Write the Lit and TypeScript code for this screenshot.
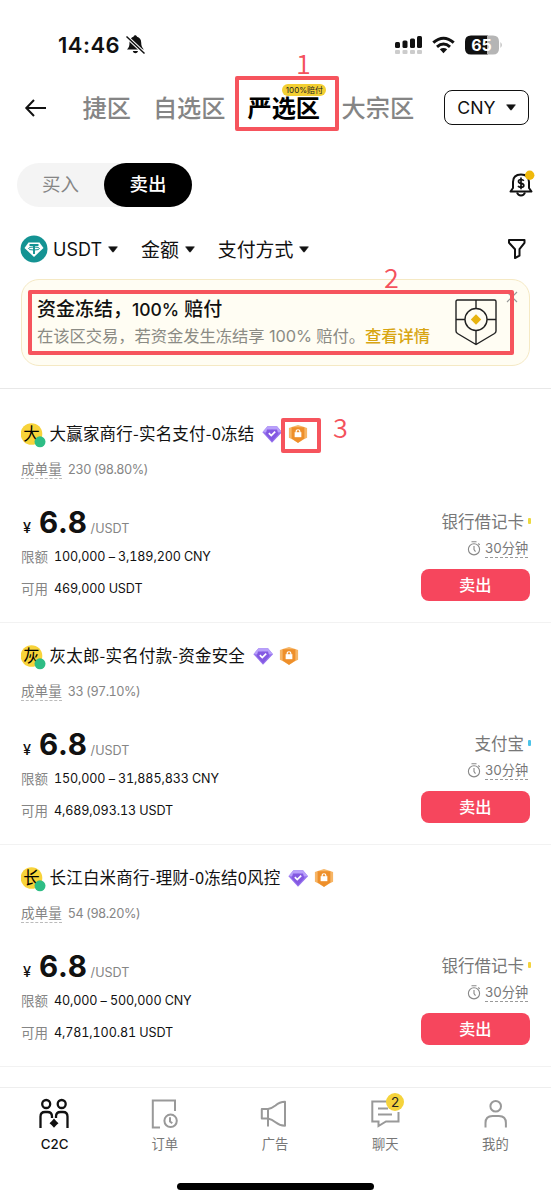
import { LitElement, html, css, svg } from "lit";
import { customElement, property } from "lit/decorators.js";

const caret = html`<svg width="10" height="7" viewBox="0 0 10 7"><path d="M.6.8h8.8L5.6 5.8q-.6.7-1.2 0z" fill="#111" stroke="#111" stroke-width=".6" stroke-linejoin="round"/></svg>`;

const tabIcons = [
  svg`<g fill="none" stroke="#111" stroke-width="2.3"><circle cx="7.2" cy="6" r="4"/><circle cx="22.700" cy="6" r="4"/><path d="M1.500 30V18.500q0-4.500 4.500-4.500h2.500q4.500 0 4.500 4.500V20"/><path d="M17 20v-1.500q0-4.500 4.500-4.500h2.500q4.500 0 4.500 4.500V30"/></g><path d="M15 20.600q2 2.800 4.500 4.600-2.500 1.800-4.500 4.600-2-2.800-4.500-4.600 2.500-1.800 4.500-4.600z" fill="#111"/>`,
  svg`<g fill="none" stroke="#999" stroke-width="2"><path d="M11 29.500H3.800v-27H26v10.500"/><circle cx="21.600" cy="22.800" r="6.200"/><path d="M21 19.300v4.200l2.300 1.800"/></g>`,
  svg`<g fill="none" stroke="#999" stroke-width="2" stroke-linejoin="round"><path d="M2.800 11H9v9.500H2.800z"/><path d="M9 11q4-.8 7.500-3.500 4-3.500 9.500-3.700v24q-5.500-.2-9.500-3.500-3.500-3-7.500-3.800M9 20.500v8"/></g>`,
  svg`<g fill="none" stroke="#999" stroke-width="2"><path d="M17 3.500H2.300v20h6.200v4.500l7.500-4.500h12.500V14"/><path d="M8 10.500h10M8 16.500h14"/></g>`,
  svg`<g fill="none" stroke="#999" stroke-width="2"><circle cx="15.700" cy="8.200" r="5.300"/><path d="M5.500 29.500v-4.500q0-7 7-7h6.400q7 0 7 7v4.500"/></g>`,
];

@customElement("offer-card")
class OfferCard extends LitElement {
  @property() name = "";
  @property() stats = "";
  @property() limit = "";
  @property() available = "";
  @property() method = "";
  @property() tint = "";

  static styles = css`
    :host { display: block; height: 222px; box-sizing: border-box; box-shadow: 0 1px #f2f2f2; padding: 20px 21px 0; color: #111; font-variant-numeric: tabular-nums; }
    .head { height: 28px; display: flex; align-items: center; font-size: 16.500px; white-space: nowrap; }
    .avatar { width: 28.500px; flex: none; height: 28px; }
    .name { margin-right: 8px; letter-spacing: .2px; font-family: "Noto Sans CJK SC", sans-serif; padding-bottom: 2px; }
    .badge { width: 20px; height: 20px; margin-right: 6px; }
    .stats { display: flex; margin-top: 11px; height: 21px; line-height: 21px; color: #858585; font-size: 12.700px; letter-spacing: -.55px; }
    .stats .key { border-bottom: 1px dashed #bbb; height: 19px; line-height: 20px; margin-right: 6px; font-size: 13.600px; letter-spacing: 0; }
    .body { display: flex; justify-content: space-between; }
    .left { padding-top: 26px; }
    .price { display: flex; align-items: baseline; height: 32px; line-height: 32px; padding-left: 2px; }
    .yen { font-size: 14.500px; font-weight: 500; width: 16px; }
    .num { font-size: 29.500px; font-weight: 700; font-variant-numeric: normal; letter-spacing: .7px; }
    .unit { color: #858585; font-size: 12.600px; margin-left: 3px; }
    .row { display: flex; height: 20px; line-height: 20px; margin-top: 9px; font-size: 12.600px; letter-spacing: -.14px; white-space: nowrap; }
    .row + .row { margin-top: 12px; }
    .row .key { color: #858585; width: 33px; font-size: 13.500px; letter-spacing: 0; }
    .right { display: flex; flex-direction: column; align-items: flex-end; padding-top: 30px; color: #777; }
    .method { display: flex; align-items: center; height: 22px; font-size: 16.500px; gap: 4px; }
    .bar { width: 3px; height: 6px; border-radius: 1px; margin-right: -1px; }
    .time { display: flex; height: 19px; margin-top: 7px; padding-right: 2px; align-items: center; gap: 4px; font-size: 13.200px; letter-spacing: -.1px; }
    .time span { border-bottom: 1px dashed #999; line-height: 18px; height: 18px; }
    .sell { width: 109.500px; height: 32px; margin-top: 11px; border-radius: 8px; background: #f6465d; color: #fff; font-size: 16.300px; font-weight: 500; line-height: 32px; text-align: center; }
  `;

  render() {
    return html`
      <div class="head">
        <svg class="avatar" viewBox="0 0 28.5 28"><circle cx="10.500" cy="14" r="10.800" fill="#f8d33a"/><text x="10.500" y="19.500" text-anchor="middle">${this.name[0]}</text><circle cx="19" cy="21.800" r="5.500" fill="#2ebd85"/></svg>
        <span class="name">${this.name}</span>
        <svg class="badge" viewBox="0 0 22 22"><path d="M6 2.500h10.500L22 9 11 20.500 .500 9z" fill="#9672ee"/><path d="M6 2.500h10.500L22 9h-6l-5-3-5 3H.5z" fill="#b8a0fa"/><path d="M5.500 6h11l1.500 5-7 8-7-8z" fill="#8459e2"/><path d="M7.500 10l2.700 2.700L14.500 8.300" fill="none" stroke="#fff" stroke-width="1.900"/></svg>
        <svg class="badge" viewBox="0 0 22 22"><path d="M1 4.500 5 3l6-2 6 2 4 1.500V15L17 17l-6 4L5 17l-4-2z" fill="#f6b566"/><path d="M4 3.500h14V16l-7 4.500L4 16z" fill="#ee8f2a"/><path d="M7.300 9h7.400v5.500H7.300z" fill="#fff"/><path d="M9 9.500V8q0-1.700 2-1.700T13 8v1.500" fill="none" stroke="#fff" stroke-width="1.300"/></svg>
      </div>
      <div class="stats"><span class="key">成单量</span><span>${this.stats}</span></div>
      <div class="body">
        <div class="left">
          <div class="price"><span class="yen">¥</span><span class="num">6.8</span><span class="unit">/USDT</span></div>
          <div class="row"><span class="key">限额</span><span>${this.limit}</span></div>
          <div class="row"><span class="key">可用</span><span>${this.available}</span></div>
        </div>
        <div class="right">
          <div class="method"><span>${this.method}</span><i class="bar" style="background:${this.tint}"></i></div>
          <div class="time"><svg width="14" height="15" viewBox="0 0 14 15"><g fill="none" stroke="#888" stroke-width="1.100"><circle cx="7" cy="8.300" r="5.600"/><path d="M4.500.8h5M7 5v3.600l1.500 2M11.300 2.500l1.400 1.300"/></g></svg><span>30分钟</span></div>
          <div class="sell">卖出</div>
        </div>
      </div>`;
  }
}

@customElement("app-root")
class AppRoot extends LitElement {
  static styles = css`
    :host { display: block; position: relative; width: 551px; height: 1200px; overflow: hidden; background: #fff; color: #111; font-family: Inter, "Noto Sans CJK SC", sans-serif; }
    * { box-sizing: border-box; }
    .status { display: flex; align-items: center; height: 74px; padding: 15px 48px 0 58px; }
    .clock { font-size: 22px; font-weight: 600; line-height: 30px; width: 67px; letter-spacing: .5px; }
    .grow { flex: 1; }
    .signal { margin-right: 9px; }
    .wifi { margin-right: 10px; }
    .tabs { display: flex; align-items: center; height: 67px; padding: 0 22px 0 24px; font-size: 24.200px; font-weight: 500; color: #858585; white-space: nowrap; }
    .tabs > span { margin-top: -2px; }
    .back { margin-right: 35.500px; }
    .tabs .gap { margin-right: 22px; }
    .active { color: #000; font-weight: 700; position: relative; margin-right: 21.500px; }
    .promo { position: absolute; left: 35px; top: -5px; width: 44px; height: 12px; border-radius: 6px; background: #f3cf32; color: #222; font-size: 8px; font-weight: 400; line-height: 12px; text-align: center; }
    .currency { display: flex; align-items: center; justify-content: center; gap: 10px; width: 85px; height: 35px; border: 1.500px solid #111; border-radius: 8px; color: #111; font-size: 17.700px; font-weight: 400; }
    .modes { display: flex; align-items: center; justify-content: space-between; height: 44px; margin-top: 22px; padding: 0 16px 0 17px; }
    .alert { margin-top: -2px; }
    .toggle { display: flex; width: 175px; height: 44px; border-radius: 22px; background: #f4f4f4; font-size: 18.500px; line-height: 43px; text-align: center; color: #858585; }
    .toggle .off { width: 87px; }
    .toggle .on { width: 88px; border-radius: 22px; background: #000; color: #fff; font-weight: 500; }
    .filters { display: flex; align-items: center; height: 30px; margin-top: 27px; padding: 0 24px 0 20px; font-size: 18.900px; white-space: nowrap; }
    .filters span { margin-right: 6px; margin-top: -2px; }
    .filters .usdt { font-size: 18px; margin-top: 0; }
    .coin { margin-right: 5px; }
    .filters .caret { width: 10px; display: flex; margin-right: 23px; }
    .banner { display: flex; height: 87px; margin: 15px 21px 0; border: 1.500px solid #f5e9c4; border-radius: 18px; background: #fffdf3; padding: 16px 8px 0 15px; }
    .banner h3 { margin: 0; font-size: 19px; font-weight: 500; line-height: 28px; }
    .banner .pct { font-size: 17.500px; letter-spacing: 0; }
    .banner p { margin: 0; font-size: 16.350px; line-height: 25px; color: #8b8b84; white-space: nowrap; letter-spacing: -.1px; }
    .banner b { color: #d8a512; font-weight: 500; }
    .banner .text { width: 418px; flex: none; }
    .close { margin-left: 9px; margin-top: -5px; }
    .shield { margin-top: 3px; flex: none; }
    .list { border-top: 1px solid #e8e8e8; margin-top: 22px; padding-top: 11px; height: 699px; }
    .nav { display: grid; grid-template-columns: repeat(5, 1fr); border-top: 1px solid #eee; height: 83px; padding-top: 10px; font-size: 13.300px; color: #777; }
    .item { display: flex; flex-direction: column; align-items: center; line-height: 20px; position: relative; gap: 4px; margin-left: -1px; }
    .item:first-child { color: #111; font-weight: 500; }
    .count { position: absolute; left: 56.500px; top: -5px; width: 18px; height: 18px; border-radius: 9px; background: #f5d33c; color: #222; font-size: 13.500px; line-height: 18px; text-align: center; }
    .home { width: 197px; height: 7px; margin: 13px 0 0 177px; border-radius: 4px; background: #000; }
    .mark { position: absolute; border: 4.500px solid #f6545d; border-radius: 2px; }
    .m1 { left: 235px; top: 76px; width: 104px; height: 55px; }
    .m2 { left: 28px; top: 290px; width: 486px; height: 65px; }
    .m3 { left: 281px; top: 418px; width: 40px; height: 35px; }
    .digit { position: absolute; color: #f4525c; font: 350 27px/28px "Noto Sans CJK SC", sans-serif; }
    .d1 { left: 296px; top: 49px; }
    .d2 { left: 384px; top: 263px; }
    .d3 { left: 333px; top: 413px; }
  `;

  render() {
    return html`
      <div class="status">
        <span class="clock">14:46</span>
        <svg width="21" height="21" viewBox="0 0 21 21"><path d="M2 15.500c2-2 2.500-3.500 2.500-7C4.500 5 7 3.300 8.500 2.800 9 .800 11.500.800 12 2.800c2.500.7 4.200 2.600 4.200 5.700 0 3.500.800 5 2.600 7zM7.800 17h5.200c-.7 3-4.500 3-5.200 0z" fill="#111"/><path d="M1.500 2.500 19.500 19.500" stroke="#fff" stroke-width="3.600"/><path d="M1.500 2.500 19.500 19.500" stroke="#111" stroke-width="1.500"/></svg>
        <span class="grow"></span>
        <svg class="signal" width="28" height="20" viewBox="0 0 28 20"><g fill="#111"><rect x="0" y="7" width="5" height="6" rx="1.500"/><rect x="7.500" y="5.500" width="5" height="7.500" rx="1.500"/><rect x="15" y="3.500" width="5" height="9.500" rx="1.500"/><rect x="22" y="1" width="5" height="12" rx="1.500"/></g><g fill="#ccc"><rect x="0" y="15" width="5" height="4" rx="1"/><rect x="7.500" y="15" width="5" height="4" rx="1"/><rect x="15" y="15" width="5" height="4" rx="1"/><rect x="22" y="15" width="5" height="4" rx="1"/></g></svg>
        <svg class="wifi" width="23" height="18" viewBox="0 0 23 18"><g fill="none" stroke="#111" stroke-width="3"><path d="M1.300 6.700q10.200-9 20.400 0"/><path d="M5 10.900q6.500-5.700 13 0"/></g><path d="M7.800 13.300q3.700-2.800 7.400 0L11.500 17.300z" fill="#111"/></svg>
        <svg width="38" height="20" viewBox="0 0 38 20"><path d="M6 .5h17v19H6q-6 0-6-6v-7q0-6 6-6z" fill="#111"/><path d="M22 .5h6q6 0 6 6v7q0 6-6 6h-6z" fill="#b5b5b5"/><path d="M35.500 7q2.500 3 0 6z" fill="#b5b5b5"/><text x="16.500" y="15.800" text-anchor="middle" font-size="16" font-weight="700" fill="#fff">65</text></svg>
      </div>
      <div class="tabs">
        <svg class="back" width="23" height="20" viewBox="0 0 23 20"><path d="M22 10H2.500M10 2 2.300 10l7.700 8" fill="none" stroke="#111" stroke-width="2"/></svg>
        <span class="gap">捷区</span><span class="gap">自选区</span>
        <span class="active">严选区<span class="promo">100%赔付</span></span>
        <span>大宗区</span><span class="grow"></span>
        <div class="currency"><span>CNY</span>${caret}</div>
      </div>
      <div class="modes">
        <div class="toggle"><span class="off">买入</span><span class="on">卖出</span></div>
        <svg class="alert" width="27" height="28" viewBox="0 0 27 28"><g fill="none" stroke="#111" stroke-width="2" stroke-linejoin="round"><path d="M2.500 21.500 5 18v-6q0-7.500 8-7.500t8 7.500v6l2.500 3.500z"/><path d="M9 22.500q1 3 4 3t4-3"/></g><path d="M15.700 10.800q-.6-1.300-2.700-1.300-2.500 0-2.500 1.900 0 1.600 2.500 1.900 2.800.4 2.800 2.100 0 1.900-2.800 1.900-2.200 0-2.900-1.500M13 7.500v11.700" fill="none" stroke="#111" stroke-width="1.700"/><circle cx="21.700" cy="5.300" r="4.700" fill="#f0b90b"/></svg>
      </div>
      <div class="filters">
        <svg class="coin" width="28" height="28" viewBox="0 0 28 28"><circle cx="14" cy="14" r="13.500" fill="#149393"/><path d="M8.500 7.500h11l4 5.500-9.500 9-9.500-9z" fill="#fff"/><path d="M9.500 10h9M14 10v9" stroke="#149393" stroke-width="1.900"/><ellipse cx="14" cy="13.500" rx="5.500" ry="1.500" fill="none" stroke="#149393"/></svg>
        <span class="usdt">USDT</span><i class="caret">${caret}</i>
        <span>金额</span><i class="caret">${caret}</i>
        <span>支付方式</span><i class="caret">${caret}</i>
        <span class="grow"></span>
        <svg width="20" height="22" viewBox="0 0 20 22"><path d="M2 2h15.500v2.800l-5 6.400v6.500L8 20v-8.800L2 4.800z" fill="none" stroke="#111" stroke-width="2" stroke-linejoin="round"/></svg>
      </div>
      <div class="banner">
        <div class="text"><h3>资金冻结，<span class="pct">100%</span> 赔付</h3><p>在该区交易，若资金发生冻结享 100% 赔付。<b>查看详情</b></p></div>
        <svg class="shield" width="42" height="47" viewBox="0 0 42 47"><path d="M2.500 1h37q1.500 0 1.500 1.500V32q0 1.500-1.500 2.500L21 45.500 2.500 34.500Q1 33.500 1 32V2.500Q1 1 2.500 1zM21 1v9M21 32v13M1 20.500h9M32 20.500h9" fill="none" stroke="#222" stroke-width="1.400"/><circle cx="21" cy="20.500" r="11" fill="none" stroke="#222" stroke-width="1.400"/><path d="M21 15.300l5.200 5.200-5.200 5.200-5.200-5.200z" fill="#e8b40f"/></svg>
        <svg class="close" width="12" height="12" viewBox="0 0 12 12"><path d="M1 1l10 10M11 1 1 11" stroke="#999" stroke-width="1.200"/></svg>
      </div>
      <div class="list">
        <offer-card name="大赢家商行-实名支付-0冻结" stats="230 (98.80%)" limit="100,000 – 3,189,200 CNY" available="469,000 USDT" method="银行借记卡" tint="#ecd93f"></offer-card>
        <offer-card name="灰太郎-实名付款-资金安全" stats="33 (97.10%)" limit="150,000 – 31,885,833 CNY" available="4,689,093.13 USDT" method="支付宝" tint="#4cc3e8"></offer-card>
        <offer-card name="长江白米商行-理财-0冻结0风控" stats="54 (98.20%)" limit="40,000 – 500,000 CNY" available="4,781,100.81 USDT" method="银行借记卡" tint="#f3d33f"></offer-card>
      </div>
      <div class="nav">
        ${["C2C", "订单", "广告", "聊天", "我的"].map((label, i) => html`
          <div class="item"><svg width="31" height="32" viewBox="0 0 31 32">${tabIcons[i]}</svg><span>${label}</span>${i === 3 ? html`<span class="count">2</span>` : ""}</div>`)}
      </div>
      <div class="home"></div>
      <div class="mark m1"></div><div class="mark m2"></div><div class="mark m3"></div>
      <span class="digit d1">1</span><span class="digit d2">2</span><span class="digit d3">3</span>
    `;
  }
}
